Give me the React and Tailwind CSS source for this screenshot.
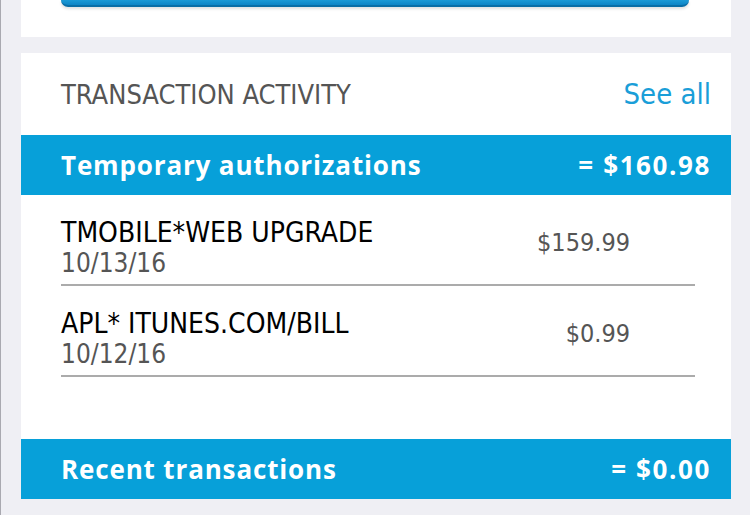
const items = [
  { name: 'TMOBILE*WEB UPGRADE', date: '10/13/16', amount: '$159.99' },
  { name: 'APL* ITUNES.COM/BILL', date: '10/12/16', amount: '$0.99' },
]

const body = { fontFamily: '"DejaVu Sans Condensed", "DejaVu Sans", sans-serif', fontStretch: 'condensed' }
const heading = { fontFamily: '"Open Sans", "Noto Sans", sans-serif' }

function SectionBar({ title, total }) {
  return (
    <div
      className="flex h-[60px] items-center justify-between bg-[#07a0d9] pl-[40px] pr-[20px] text-[26px] font-bold text-white"
      style={heading}
    >
      <span className="tracking-[0.85px]">{title}</span>
      <span className="tracking-[1.6px]">{total}</span>
    </div>
  )
}

export default function App() {
  return (
    <div className="h-[515px] w-[750px] overflow-hidden border-l border-[#a9a9b0] bg-[#efeff4]">
      {/* previous card, scrolled off */}
      <div className="ml-[20px] h-[37px] w-[710px] bg-white px-[40px]">
        <div className="h-[7px] w-[628px] rounded-b-[8px] border-b-2 border-[#0a6ea6] bg-gradient-to-b from-[#1b9ad6] to-[#0d85c6] shadow-[0_2px_3px_rgba(0,0,0,0.12)]" />
      </div>

      <div className="ml-[20px] mt-[16px] w-[710px] bg-white">
        <div className="flex h-[82px] items-center justify-between pl-[40px] pr-[20px] pt-[2px]" style={body}>
          <span className="text-[27px] text-[#555555]">TRANSACTION ACTIVITY</span>
          <span className="text-[29px] text-[#1a9ed8]">See all</span>
        </div>

        <SectionBar title="Temporary authorizations" total="= $160.98" />

        <div className="pl-[40px] pr-[36px]" style={body}>
          {items.map((it) => (
            <div
              key={it.name}
              className="flex h-[91px] items-center justify-between border-b-2 border-[#ababab] pt-[16px] pr-[65px]"
            >
              <div className="flex flex-col leading-[31px]">
                <span className="text-[28px] text-black">{it.name}</span>
                <span className="text-[26px] text-[#555555]">{it.date}</span>
              </div>
              <span className="mb-[10px] text-[25px] text-[#555555]">{it.amount}</span>
            </div>
          ))}
        </div>

        <div className="h-[62px]" />

        <SectionBar title="Recent transactions" total="= $0.00" />
      </div>
    </div>
  )
}
